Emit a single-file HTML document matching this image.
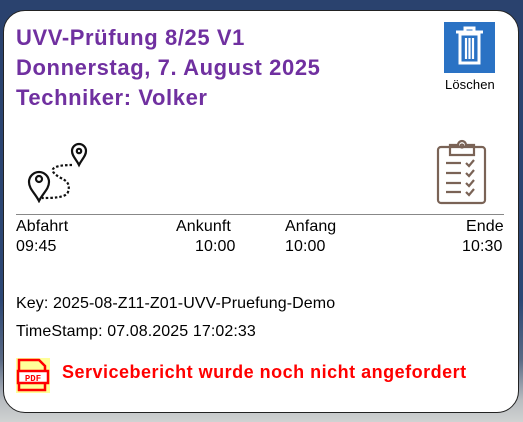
<!DOCTYPE html><html><head><style>
body{margin:0;width:523px;height:422px;overflow:hidden;position:relative;font-family:"Liberation Sans",sans-serif;background:linear-gradient(#2a426e 0,#2c4775 300px,#5a6a85 360px,#b8bcc0 400px,#d0d2d2 422px);}
.card{position:absolute;left:3px;top:10px;width:514px;height:401px;background:#fff;border:1px solid #222;border-radius:22px;}
.t{position:absolute;left:16px;color:#7030a0;font-weight:bold;font-size:22px;letter-spacing:0.6px;white-space:nowrap}
.s{position:absolute;font-size:16px;letter-spacing:0.1px;color:#000;white-space:nowrap}
</style></head><body>
<div class="card"></div>
<div class="t" style="top:25px">UVV-Prüfung 8/25 V1</div>
<div class="t" style="top:55px">Donnerstag, 7. August 2025</div>
<div class="t" style="top:85px">Techniker: Volker</div>
<div style="position:absolute;left:444px;top:22px;width:51px;height:51px;background:#2a72c4"></div>
<svg style="position:absolute;left:444px;top:22px" width="51" height="51" viewBox="0 0 51 51" fill="none" stroke="#fff" stroke-width="3"><path d="M12 10h27M21 9V6h9v3"/><path d="M16 12h19v29H16z"/><path d="M22 16v21M25.5 16v21M29 16v21" stroke-width="2.2"/></svg>
<div class="s" style="left:445px;top:77px;font-size:13px">Löschen</div>
<svg style="position:absolute;left:26px;top:138px" width="66" height="65" viewBox="0 0 66 65" fill="none" stroke="#111" stroke-width="2.2"><path d="M53 27c-3-6-7-9-7-14a7 7 0 0 1 14 0c0 5-4 8-7 14z"/><circle cx="53" cy="13" r="2.2"/><path d="M13 63c-4-8-10-12-10-19a10 10 0 0 1 20 0c0 7-6 11-10 19z"/><circle cx="13" cy="41" r="3"/><path d="M46 27c-8 0-24 1-18 8s18 6 14 19c-2 6-16 6-26 6" stroke-dasharray="2.5 2"/></svg>
<svg style="position:absolute;left:436px;top:139px" width="52" height="66" viewBox="0 0 52 66" fill="none" stroke="#7a6356" stroke-width="2.2"><rect x="2" y="8" width="47" height="56" rx="3"/><path d="M14 16V6h8a4 4 0 0 1 8 0h8v10z"/><circle cx="26" cy="7" r="1.5"/><path d="M10 24h15M10 34h15M10 44h15M10 53h15"/><path d="M30 24l3 3 5-6M30 34l3 3 5-6M30 44l3 3 5-6M30 53l3 3 5-6"/></svg>
<div style="position:absolute;left:16px;top:214px;width:488px;height:1px;background:#888"></div>
<div class="s" style="left:16px;top:218px">Abfahrt</div>
<div class="s" style="left:16px;top:238px">09:45</div>
<div class="s" style="left:176px;top:218px">Ankunft</div>
<div class="s" style="left:195px;top:238px">10:00</div>
<div class="s" style="left:285px;top:218px">Anfang</div>
<div class="s" style="left:285px;top:238px">10:00</div>
<div class="s" style="left:466px;top:218px">Ende</div>
<div class="s" style="left:462px;top:238px">10:30</div>
<div class="s" style="left:16px;top:295px">Key: 2025-08-Z11-Z01-UVV-Pruefung-Demo</div>
<div class="s" style="left:16px;top:323px">TimeStamp: 07.08.2025 17:02:33</div>
<svg style="position:absolute;left:16px;top:358px" width="34" height="35" viewBox="0 0 34 35"><rect width="34" height="35" fill="#ffff99"/><path d="M3 2h20l6 6v24H3z" fill="none" stroke="#f00" stroke-width="2.5"/><rect x="2" y="13" width="30" height="12" fill="#fff" stroke="#f00" stroke-width="2.5"/><text x="17" y="23" font-size="9" font-weight="bold" fill="#f00" text-anchor="middle" font-family="Liberation Mono">PDF</text></svg>
<div style="position:absolute;left:62px;top:362px;color:#f00;font-weight:bold;font-size:18px;letter-spacing:0.5px;white-space:nowrap">Servicebericht wurde noch nicht angefordert</div>
</body></html>
